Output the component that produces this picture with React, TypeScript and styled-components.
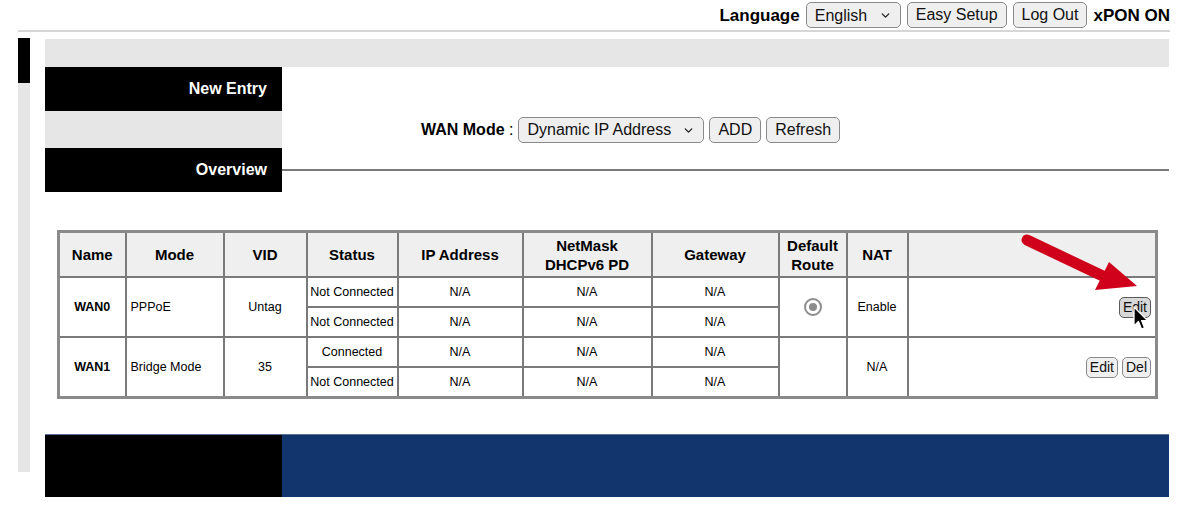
import React from "react";
import styled, { createGlobalStyle } from "styled-components";
import { ChevronDown } from "lucide-react";

const GlobalStyle = createGlobalStyle`
  body {
    margin: 0;
    background: #fff;
    font-family: "Liberation Sans", Arial, sans-serif;
    color: #000;
  }
`;

const Page = styled.div`
  position: relative;
  width: 1183px;
  height: 521px;
  overflow: hidden;
`;

const TopBar = styled.header`
  margin-left: 18px;
  width: 1152px;
  height: 30px;
  display: flex;
  justify-content: flex-end;
  align-items: center;
  gap: 6px;
  border-bottom: 2px solid #d6d6d6;
`;

const TopLabel = styled.span`
  font-size: 17px;
  font-weight: bold;
  margin-top: 2px;
`;

const Button = styled.button<{ $small?: boolean; $hover?: boolean }>`
  font-family: "Liberation Sans", Arial, sans-serif;
  font-size: ${(p) => (p.$small ? "14px" : "16px")};
  height: ${(p) => (p.$small ? "21px" : "26px")};
  padding: ${(p) => (p.$small ? "0 3px" : "0 8px")};
  background: ${(p) => (p.$hover ? "#d8d8d8" : "#efefef")};
  border: 1px solid ${(p) => (p.$hover ? "#5a5a5a" : "#8a8a8a")};
  border-radius: 5px;
  color: #111;
  cursor: pointer;
`;

const SelectWrap = styled.label<{ $width: number }>`
  position: relative;
  display: inline-block;
  width: ${(p) => p.$width}px;
  height: 26px;
  svg {
    position: absolute;
    right: 9px;
    top: 7px;
    pointer-events: none;
  }
`;

const Select = styled.select`
  appearance: none;
  width: 100%;
  height: 100%;
  font-family: "Liberation Sans", Arial, sans-serif;
  font-size: 16px;
  color: #111;
  padding: 0 0 0 8px;
  background: #efefef;
  border: 1px solid #8a8a8a;
  border-radius: 5px;
`;

const Body = styled.div`
  display: flex;
  margin-top: 6px;
`;

const Scrollbar = styled.div`
  margin-left: 18px;
  width: 12px;
  height: 434px;
  background: #e6e6e6;
  &::before {
    content: "";
    display: block;
    height: 45px;
    background: #000;
  }
`;

const Content = styled.main`
  margin-left: 15px;
  width: 1124px;
  padding-top: 1px;
`;

const Band = styled.div`
  height: 28px;
  background: #e6e6e6;
`;

const Sections = styled.div`
  display: grid;
  grid-template-columns: 237px 1fr;
  grid-template-rows: 44px 37px 44px;
`;

const BlockTitle = styled.div<{ $tone: "black" | "gray" }>`
  background: ${(p) => (p.$tone === "black" ? "#000" : "#e6e6e6")};
  color: #fff;
  font-size: 16px;
  font-weight: bold;
  display: flex;
  align-items: center;
  justify-content: flex-end;
  padding-right: 15px;
`;

const ModeRow = styled.div`
  display: flex;
  align-items: center;
  gap: 5px;
  padding-left: 139px;
`;

const ModeLabel = styled.span`
  font-size: 16px;
  b {
    font-weight: bold;
  }
`;

const Rule = styled.div`
  display: flex;
  align-items: center;
  &::after {
    content: "";
    flex: 1;
    height: 2px;
    background: #7a7a7a;
  }
`;

const TableWrap = styled.div`
  padding: 38px 0 0 12px;
`;

const Table = styled.table`
  width: 1098px;
  table-layout: fixed;
  border-collapse: collapse;
  border: 3px solid #8a8a8a;
  th,
  td {
    border: 2px solid #7a7a7a;
    text-align: center;
    padding: 0;
  }
  th {
    background: #efefef;
    font-size: 15px;
    font-weight: bold;
    height: 43px;
    line-height: 19px;
  }
  td {
    font-size: 12.5px;
    height: 28px;
  }
`;

const Cell = styled.td<{ $align?: "left" | "right"; $bold?: boolean }>`
  && {
    text-align: ${(p) => p.$align ?? "center"};
    font-weight: ${(p) => (p.$bold ? "bold" : "normal")};
    padding: ${(p) => (p.$align === "left" ? "0 0 0 4px" : p.$align === "right" ? "0 4px 0 0" : "0")};
  }
`;

const Actions = styled.div`
  display: flex;
  justify-content: flex-end;
  gap: 4px;
`;

const Radio = styled.span`
  display: inline-flex;
  align-items: center;
  justify-content: center;
  width: 14px;
  height: 14px;
  border: 2px solid #8c8c8c;
  border-radius: 50%;
  vertical-align: middle;
  &::after {
    content: "";
    width: 8px;
    height: 8px;
    border-radius: 50%;
    background: #8c8c8c;
  }
`;

const Footer = styled.footer`
  margin-top: 35px;
  height: 62px;
  display: grid;
  grid-template-columns: 237px 1fr;
  border-top: 1px solid #5b6f95;
  div:first-child {
    background: #000;
  }
  div:last-child {
    background: #13356e;
  }
`;

const Overlay = styled.svg<{ $x: number; $y: number }>`
  position: absolute;
  left: ${(p) => p.$x}px;
  top: ${(p) => p.$y}px;
  pointer-events: none;
`;

const cols = [67, 98, 83, 91, 125, 129, 127, 68, 61, 249];

type Sub = { status: string; ip: string; mask: string; gw: string };
type Wan = {
  name: string;
  mode: string;
  vid: string;
  subs: Sub[];
  route: boolean;
  nat: string;
  del: boolean;
};

const na = { ip: "N/A", mask: "N/A", gw: "N/A" };

const wans: Wan[] = [
  {
    name: "WAN0",
    mode: "PPPoE",
    vid: "Untag",
    subs: [
      { status: "Not Connected", ...na },
      { status: "Not Connected", ...na },
    ],
    route: true,
    nat: "Enable",
    del: false,
  },
  {
    name: "WAN1",
    mode: "Bridge Mode",
    vid: "35",
    subs: [
      { status: "Connected", ...na },
      { status: "Not Connected", ...na },
    ],
    route: false,
    nat: "N/A",
    del: true,
  },
];

export default function App() {
  return (
    <Page>
      <GlobalStyle />
      <TopBar>
        <TopLabel>Language</TopLabel>
        <SelectWrap $width={95}>
          <Select defaultValue="en">
            <option value="en">English</option>
          </Select>
          <ChevronDown size={13} strokeWidth={2.5} color="#222" />
        </SelectWrap>
        <Button>Easy Setup</Button>
        <Button>Log Out</Button>
        <TopLabel>xPON ON</TopLabel>
      </TopBar>
      <Body>
        <Scrollbar />
        <Content>
          <Band />
          <Sections>
            <BlockTitle $tone="black">New Entry</BlockTitle>
            <div />
            <BlockTitle $tone="gray" />
            <ModeRow>
              <ModeLabel>
                <b>WAN Mode</b> :
              </ModeLabel>
              <SelectWrap $width={186}>
                <Select defaultValue="dhcp">
                  <option value="dhcp">Dynamic IP Address</option>
                </Select>
                <ChevronDown size={13} strokeWidth={2.5} color="#222" />
              </SelectWrap>
              <Button>ADD</Button>
              <Button>Refresh</Button>
            </ModeRow>
            <BlockTitle $tone="black">Overview</BlockTitle>
            <Rule />
          </Sections>
          <TableWrap>
            <Table>
              <colgroup>
                {cols.map((w, i) => (
                  <col key={i} style={{ width: w }} />
                ))}
              </colgroup>
              <thead>
                <tr>
                  <th>Name</th>
                  <th>Mode</th>
                  <th>VID</th>
                  <th>Status</th>
                  <th>IP Address</th>
                  <th>
                    NetMask
                    <br />
                    DHCPv6 PD
                  </th>
                  <th>Gateway</th>
                  <th>
                    Default
                    <br />
                    Route
                  </th>
                  <th>NAT</th>
                  <th />
                </tr>
              </thead>
              <tbody>
                {wans.map((w, wi) =>
                  w.subs.map((s, si) => (
                    <tr key={`${wi}-${si}`}>
                      {si === 0 && (
                        <>
                          <Cell rowSpan={2} $bold>
                            {w.name}
                          </Cell>
                          <Cell rowSpan={2} $align="left">
                            {w.mode}
                          </Cell>
                          <Cell rowSpan={2}>{w.vid}</Cell>
                        </>
                      )}
                      <Cell>{s.status}</Cell>
                      <Cell>{s.ip}</Cell>
                      <Cell>{s.mask}</Cell>
                      <Cell>{s.gw}</Cell>
                      {si === 0 && (
                        <>
                          <Cell rowSpan={2}>{w.route && <Radio />}</Cell>
                          <Cell rowSpan={2}>{w.nat}</Cell>
                          <Cell rowSpan={2} $align="right">
                            <Actions>
                              <Button $small $hover={!w.del}>
                                Edit
                              </Button>
                              {w.del && <Button $small>Del</Button>}
                            </Actions>
                          </Cell>
                        </>
                      )}
                    </tr>
                  ))
                )}
              </tbody>
            </Table>
          </TableWrap>
          <Footer>
            <div />
            <div />
          </Footer>
        </Content>
      </Body>

      <Overlay $x={1015} $y={228} width={135} height={70} viewBox="0 0 135 70">
        <line x1="12" y1="12" x2="92" y2="50" stroke="#d0021b" strokeWidth="11" strokeLinecap="round" />
        <polygon points="80,62 94,34 122,58" fill="#d0021b" />
      </Overlay>
      <Overlay $x={1132} $y={306} width={18} height={26} viewBox="0 0 18 26">
        <path
          d="M2 1 L2 20 L6.5 15.5 L9.5 23 L12.5 21.8 L9.6 14.6 L15.5 14.6 Z"
          fill="#000"
          stroke="#fff"
          strokeWidth="1.3"
          strokeLinejoin="round"
        />
      </Overlay>
    </Page>
  );
}
